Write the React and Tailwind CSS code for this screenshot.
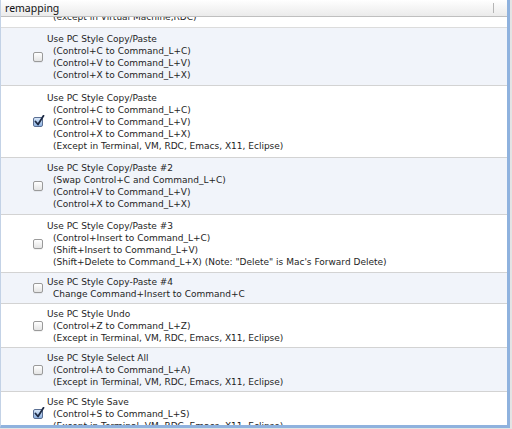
import React from "react";

const EXCEPT = "(Except in Terminal, VM, RDC, Emacs, X11, Eclipse)";

const rows = [
  {
    h: "h-[58px]",
    checked: false,
    title: "Use PC Style Copy/Paste",
    lines: ["(Control+C to Command_L+C)", "(Control+V to Command_L+V)", "(Control+X to Command_L+X)"],
  },
  {
    h: "h-[72px]",
    checked: true,
    title: "Use PC Style Copy/Paste",
    lines: ["(Control+C to Command_L+C)", "(Control+V to Command_L+V)", "(Control+X to Command_L+X)", EXCEPT],
  },
  {
    h: "h-[57px]",
    checked: false,
    title: "Use PC Style Copy/Paste #2",
    lines: ["(Swap Control+C and Command_L+C)", "(Control+V to Command_L+V)", "(Control+X to Command_L+X)"],
  },
  {
    h: "h-[58px]",
    checked: false,
    title: "Use PC Style Copy/Paste #3",
    lines: [
      "(Control+Insert to Command_L+C)",
      "(Shift+Insert to Command_L+V)",
      "(Shift+Delete to Command_L+X) (Note: \"Delete\" is Mac's Forward Delete)",
    ],
  },
  {
    h: "h-[31px]",
    checked: false,
    title: "Use PC Style Copy-Paste #4",
    lines: ["Change Command+Insert to Command+C"],
  },
  {
    h: "h-[44px]",
    checked: false,
    title: "Use PC Style Undo",
    lines: ["(Control+Z to Command_L+Z)", EXCEPT],
  },
  {
    h: "h-[44px]",
    checked: false,
    title: "Use PC Style Select All",
    lines: ["(Control+A to Command_L+A)", EXCEPT],
  },
  {
    h: "h-[44px]",
    checked: true,
    title: "Use PC Style Save",
    lines: ["(Control+S to Command_L+S)", EXCEPT],
  },
];

// mac style checkbox
const CheckBox = ({ checked }) => {
  if (!checked) {
    return (
      <div className="h-[10px] w-[10px] rounded-[2px] border border-[#9a9a9a] bg-gradient-to-b from-white to-[#e4e4e4] shadow-[0_1px_0_rgba(0,0,0,0.05)]" />
    );
  }

  return (
    <div className="relative h-[10px] w-[10px] rounded-[2px] border border-[#5a6f93] bg-gradient-to-b from-[#d6e5f7] to-[#8fb3e2]">
      <svg
        className="absolute -top-[3px] left-[0px]"
        width="11"
        height="12"
        viewBox="0 0 11 12"
      >
        <path
          d="M1.5 6.5 L4 9.5 L9.5 0.8"
          fill="none"
          stroke="#1c2a44"
          strokeWidth="1.8"
          strokeLinecap="round"
          strokeLinejoin="round"
        />
      </svg>
    </div>
  );
};

const Row = ({ row, shaded }) => (
  <div
    className={`flex ${row.h} shrink-0 items-center border-b border-[#d3d3d3] ${
      shaded ? "bg-[#f1f4fa]" : "bg-white"
    }`}
  >
    <div className="flex w-[46px] shrink-0 justify-end pr-[4px]">
      <CheckBox checked={row.checked} />
    </div>

    <div className="flex flex-col text-[9px] leading-[12px] text-[#1e1e1e]">
      <span>{row.title}</span>
      {row.lines.map((line) => (
        <span key={line} className="whitespace-pre pl-[6px]">
          {line}
        </span>
      ))}
    </div>
  </div>
);

const App = () => {
  return (
    <div
      className="h-[429px] w-[512px] overflow-hidden bg-[#e4e4e4]"
      style={{ fontFamily: '"DejaVu Sans", "Lucida Grande", sans-serif' }}
    >
      <div className="flex h-[428px] w-[510px] flex-col overflow-hidden border-b-[3px] border-l border-r-[3px] border-[#8fb2de] border-l-[#c3d2e6] bg-white">

        {/* ---------- column header ---------- */}
        <div className="flex h-[17px] shrink-0 items-center border-b border-[#bfbfbf] bg-gradient-to-b from-white to-[#ebebeb]">
          <span
            className="flex-1 pl-[4px] text-[10.5px] leading-none text-[#111]"
            style={{ fontFamily: '"Noto Sans", sans-serif' }}
          >
            remapping
          </span>
          <div className="mr-[13px] h-[10px] w-px bg-[#b5b5b5]" />
        </div>

        {/* ---------- partially scrolled row ---------- */}
        <div className="flex h-[11px] shrink-0 items-end overflow-hidden border-b border-[#dcdcdc] bg-white">
          <span className="mb-[4px] pl-[52px] text-[9px] leading-[12px] text-[#1e1e1e]">
            (except in Virtual Machine,RDC)
          </span>
        </div>

        {rows.map((row, i) => (
          <Row key={i} row={row} shaded={i % 2 === 0} />
        ))}

      </div>
    </div>
  );
};

export default App;
